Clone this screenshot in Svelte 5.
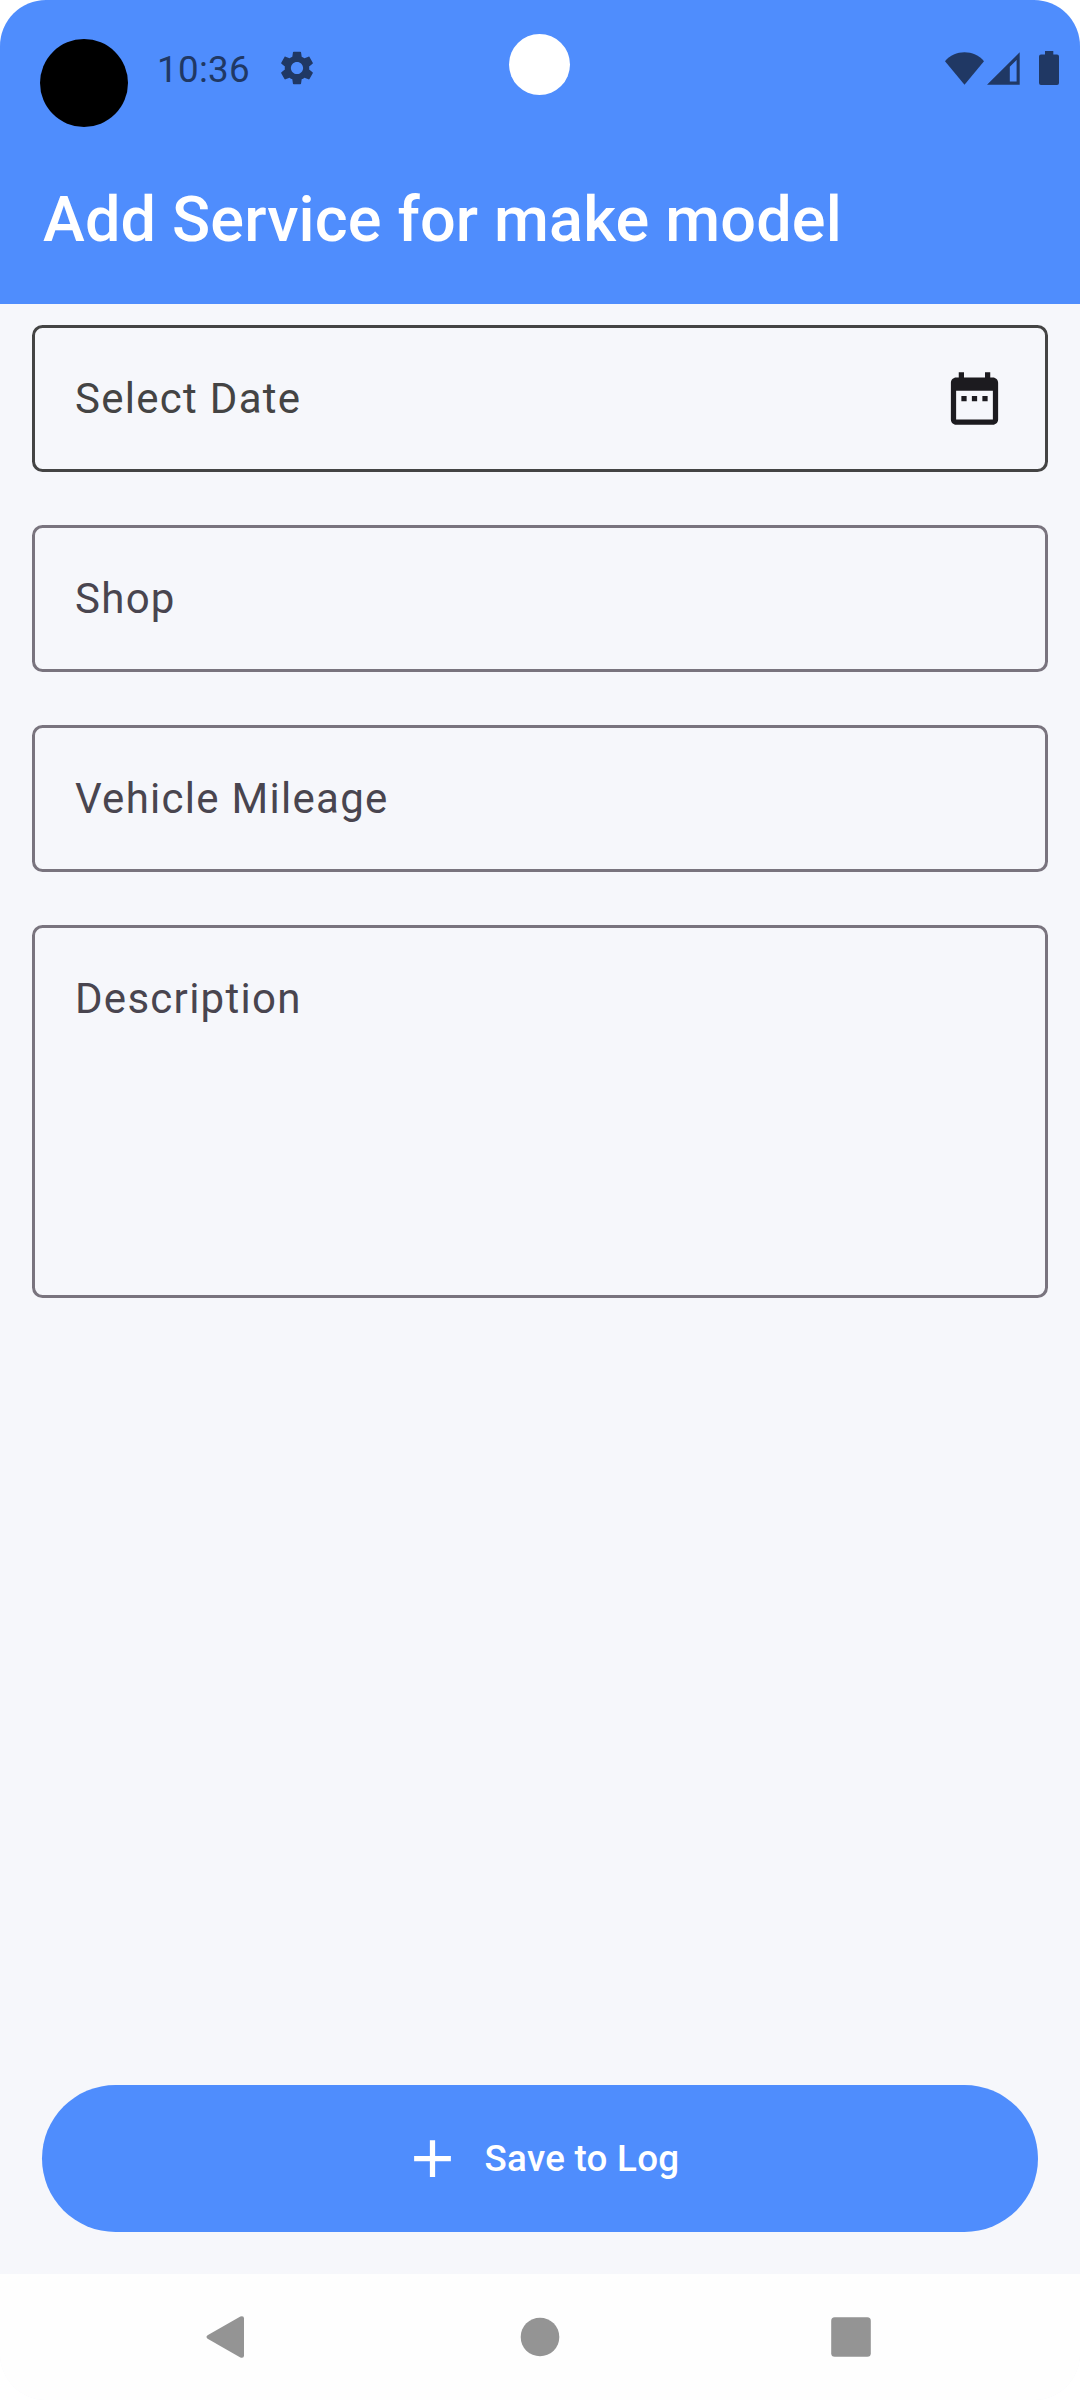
<script>
  const fields = [
    { label: 'Select Date', kind: 'date' },
    { label: 'Shop', kind: 'text' },
    { label: 'Vehicle Mileage', kind: 'text' },
    { label: 'Description', kind: 'area' }
  ];
</script>

<div class="screen">
  <header>
    <div class="status">
      <span class="time">10:36</span>
      <svg class="gear" viewBox="2 2 20 20">
        <path d="M19.14 12.94c.04-.3.06-.61.06-.94 0-.32-.02-.64-.07-.94l2.03-1.58c.18-.14.23-.41.12-.61l-1.92-3.32c-.12-.22-.37-.29-.59-.22l-2.39.96c-.5-.38-1.03-.7-1.62-.94l-.36-2.54c-.04-.24-.24-.41-.48-.41h-3.84c-.24 0-.43.17-.47.41l-.36 2.54c-.59.24-1.13.57-1.62.94l-2.39-.96c-.22-.08-.47 0-.59.22L2.74 8.87c-.12.21-.08.47.12.61l2.03 1.58c-.05.3-.09.63-.09.94s.02.64.07.94l-2.03 1.58c-.18.14-.23.41-.12.61l1.92 3.32c.12.22.37.29.59.22l2.39-.96c.5.38 1.03.7 1.62.94l.36 2.54c.05.24.24.41.48.41h3.84c.24 0 .44-.17.47-.41l.36-2.54c.59-.24 1.13-.56 1.62-.94l2.39.96c.22.08.47 0 .59-.22l1.92-3.32c.12-.22.07-.47-.12-.61l-2.01-1.58zM12 15.6c-1.98 0-3.6-1.62-3.6-3.6s1.62-3.6 3.6-3.6 3.6 1.62 3.6 3.6-1.62 3.6-3.6 3.6z" />
      </svg>
      <div class="system">
        <svg class="wifi" viewBox="0 0 39 33"><path d="M0 9.2C5 3.4 12 .3 19.5 .3S34 3.4 39 9.2L19.5 32.8z" /></svg>
        <svg class="signal" viewBox="0 0 33 33"><path fill-rule="evenodd" d="M0 32.8 32.7.3V32.8zM22.8 14.8V29.5H29.6V8z" /></svg>
        <svg class="battery" viewBox="0 0 20 34"><path d="M6 0h8.300v3.400H18a2 2 0 0 1 2 2V32a2 2 0 0 1-2 2H2a2 2 0 0 1-2-2V5.400a2 2 0 0 1 2-2h4z" /></svg>
      </div>
    </div>
    <h1>Add Service for make model</h1>
    <i class="dot"></i>
    <i class="camera"></i>
  </header>

  <main>
    {#each fields as field}
      <div class="field {field.kind}">
        <span>{field.label}</span>
        {#if field.kind === 'date'}
          <svg class="icon" viewBox="0 0 24 24">
            <path d="M9 11H7v2h2v-2zm4 0h-2v2h2v-2zm4 0h-2v2h2v-2zm2-7h-1V2h-2v2H8V2H6v2H5c-1.110 0-1.990.9-1.990 2L3 20c0 1.100.89 2 2 2h14c1.100 0 2-.9 2-2V6c0-1.100-.9-2-2-2zm0 16H5V9h14v11z" />
          </svg>
        {/if}
      </div>
    {/each}
    <button>
      <svg class="icon" viewBox="0 0 24 24"><path d="M19 13h-6v6h-2v-6H5v-2h6V5h2v6h6v2z" /></svg>
      <span>Save to Log</span>
    </button>
  </main>

  <nav>
    <svg class="back" viewBox="0 0 42 42"><path d="M2.600 19.300 35.400.5Q39 -.6 39 2.600V39.400Q39 42.600 35.400 41.500L2.600 22.700Q.4 21 2.600 19.300z" /></svg>
    <svg viewBox="0 0 42 42"><circle cx="21" cy="21" r="19.300" /></svg>
    <svg viewBox="0 0 42 42"><rect x="1.200" y="1.200" width="39.600" height="39.600" rx="3.500" /></svg>
  </nav>
</div>

<style>
  :global(body) {
    background: #fff;
  }
  .screen {
    width: 1080px;
    height: 2400px;
    display: flex;
    flex-direction: column;
    overflow: hidden;
    border-radius: 46px;
    background: #f6f7fb;
    font-family: Roboto, sans-serif;
  }
  svg {
    display: block;
    flex: none;
  }
  header {
    position: relative;
    height: 304px;
    background: #4f8dfd;
  }
  .status {
    height: 136px;
    box-sizing: border-box;
    padding: 0 21px 0 157px;
    display: flex;
    align-items: center;
    color: #203864;
    fill: currentColor;
  }
  .time {
    width: 123px;
    font-size: 36.75px;
    line-height: 44px;
    letter-spacing: 0.3px;
    padding-top: 3px;
  }
  .gear {
    width: 34px;
    height: 34px;
  }
  .system {
    margin-left: auto;
    display: flex;
    align-items: center;
  }
  .wifi {
    width: 39px;
    height: 33px;
  }
  .signal {
    width: 33px;
    height: 33px;
    margin: 0 19px 0 3px;
  }
  .battery {
    width: 20px;
    height: 34px;
  }
  h1 {
    margin: 0;
    padding: 46px 42px 0 43px;
    font-size: 63px;
    line-height: 76px;
    font-weight: 500;
    letter-spacing: 0.15px;
    color: #fff;
  }
  .dot,
  .camera {
    position: absolute;
    border-radius: 50%;
  }
  .dot {
    left: 40px;
    top: 39px;
    width: 88px;
    height: 88px;
    background: #000;
  }
  .camera {
    left: 509px;
    top: 34px;
    width: 61px;
    height: 61px;
    background: #fff;
  }
  main {
    flex: 1;
    display: flex;
    flex-direction: column;
    gap: 53px;
    padding: 21px 32px 42px;
  }
  .field {
    height: 147px;
    box-sizing: border-box;
    display: flex;
    align-items: flex-start;
    justify-content: space-between;
    padding: 39px 39px 39px 40px;
    border: 3px solid #79747e;
    border-radius: 10.5px;
    color: #49454f;
    font-size: 42px;
    line-height: 63px;
    letter-spacing: 1.28px;
  }
  .date {
    border-color: #444;
    color: #444;
  }
  .date .icon {
    fill: #1c1b1f;
  }
  .area {
    height: 373px;
  }
  .icon {
    width: 63px;
    height: 63px;
  }
  button {
    margin: auto 10px 0;
    height: 147px;
    padding: 0;
    border: 0;
    border-radius: 74px;
    background: #4f8dfd;
    color: #fff;
    fill: #fff;
    display: flex;
    align-items: center;
    justify-content: center;
    gap: 21px;
    font: 500 36.75px/53px Roboto, sans-serif;
    letter-spacing: 0.2625px;
  }
  nav {
    height: 126px;
    background: #fefefe;
    display: flex;
    align-items: center;
    justify-content: center;
    gap: 269px;
    fill: #949494;
  }
  nav svg {
    width: 42px;
    height: 42px;
  }
  nav .back {
    margin: 0 3px 0 -3px;
  }
</style>
